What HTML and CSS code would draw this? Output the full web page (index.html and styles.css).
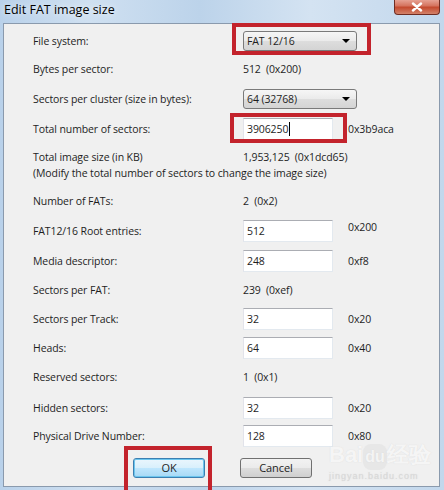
FILE: index.html
```html
<!DOCTYPE html>
<html>
<head>
<meta charset="utf-8">
<link rel="stylesheet" href="styles.css">
</head>
<body>
<div class="window">
  <div class="titlebar">
    <span class="title">Edit FAT image size</span>
    <span class="close"><svg width="14" height="10" viewBox="0 0 14 10"><path d="M3 1.5 L11 8.5 M11 1.5 L3 8.5" stroke="#fff" stroke-width="2.4" stroke-linecap="round"/></svg></span>
  </div>
  <div class="client">
    <div class="form">
      <div class="lbl">File system:</div>
      <div class="val"><div class="combo">FAT 12/16<span class="arrow"></span></div><span class="hl hl-fs"></span></div>
      <div></div>

      <div class="lbl">Bytes per sector:</div>
      <div class="val">512&nbsp; (0x200)</div>
      <div></div>

      <div class="lbl">Sectors per cluster (size in bytes):</div>
      <div class="val"><div class="combo">64 (32768)<span class="arrow"></span></div></div>
      <div></div>

      <div class="lbl">Total number of sectors:</div>
      <div class="val"><div class="input">3906250<span class="caret"></span></div><span class="hl hl-total"></span></div>
      <div class="hex">0x3b9aca</div>

      <div class="lbl end">Total image size (in KB)</div>
      <div class="val end">1,953,125&nbsp; (0x1dcd65)</div>
      <div></div>

      <div class="note">(Modify the total number of sectors to change the image size)</div>

      <div class="lbl">Number of FATs:</div>
      <div class="val">2&nbsp; (0x2)</div>
      <div></div>

      <div class="lbl">FAT12/16 Root entries:</div>
      <div class="val"><div class="input">512</div></div>
      <div class="hex hex-up">0x200</div>

      <div class="lbl">Media descriptor:</div>
      <div class="val"><div class="input">248</div></div>
      <div class="hex">0xf8</div>

      <div class="lbl">Sectors per FAT:</div>
      <div class="val">239&nbsp; (0xef)</div>
      <div></div>

      <div class="lbl">Sectors per Track:</div>
      <div class="val"><div class="input">32</div></div>
      <div class="hex">0x20</div>

      <div class="lbl">Heads:</div>
      <div class="val"><div class="input">64</div></div>
      <div class="hex">0x40</div>

      <div class="lbl">Reserved sectors:</div>
      <div class="val">1&nbsp; (0x1)</div>
      <div></div>

      <div class="lbl">Hidden sectors:</div>
      <div class="val"><div class="input">32</div></div>
      <div class="hex">0x20</div>

      <div class="lbl">Physical Drive Number:</div>
      <div class="val"><div class="input">128</div></div>
      <div class="hex">0x80</div>
    </div>
    <div class="buttons">
      <div class="btn-wrap"><div class="btn btn-ok">OK</div><span class="hl hl-ok"></span></div>
      <div class="btn">Cancel</div>
    </div>
    <div class="watermark">Bai<span class="du">du</span>经验<div class="wm-url">jingyan.baidu.com</div></div>
  </div>
</div>
</body>
</html>
```

FILE: styles.css
```css
* { box-sizing: border-box; }
html, body { margin: 0; padding: 0; }
body {
  width: 444px;
  height: 490px;
  overflow: hidden;
  font-family: "Open Sans", "Noto Sans", sans-serif;
  font-size: 10.5px;
  letter-spacing: -0.1px;
  color: #1e1e1e;
}
.window {
  width: 444px;
  height: 490px;
  background: linear-gradient(90deg, #b9d1ea 0%, #cfe0f1 20%, #bcd3ea 45%, #d4e3f2 70%, #c2d7ec 100%);
  padding: 0 4px 3px 3px;
  display: flex;
  flex-direction: column;
}
.titlebar {
  height: 23px;
  display: flex;
  align-items: flex-start;
  justify-content: space-between;
}
.title {
  font-family: "Open Sans", sans-serif;
  font-size: 12.5px;
  letter-spacing: 0;
  color: #000;
  padding-left: 1px;
  line-height: 20px;
  text-shadow: 0 0 6px rgba(255,255,255,0.9);
}
.close {
  width: 46px;
  height: 16px;
  margin-top: -1px;
  border: 1px solid #6f2c22;
  border-top: none;
  border-radius: 0 0 4px 4px;
  background: linear-gradient(#e9a99c 0%, #d5745f 45%, #c44a2f 55%, #d2826a 100%);
  display: flex;
  align-items: center;
  justify-content: center;
}
.client {
  flex: 1;
  background: #f0f0f0;
  border: 1px solid #8a9aad;
  position: relative;
  padding: 3px 0 0 29px;
}
.form {
  display: grid;
  grid-template-columns: 210px 105px 80px;
  grid-template-rows: 28px 28px 31px 29px 22px 21px 30px 30px 29px 30px 28px 30px 28px 33px 24px;
  align-items: center;
  line-height: 16px;
}
.lbl, .val, .hex { white-space: nowrap; }
.end { align-self: end; }
.note {
  grid-column: 1 / 4;
  align-self: start;
  white-space: nowrap;
}
.val { position: relative; }
.hex-up { margin-top: -8px; }
.combo {
  width: 114px;
  height: 20px;
  border: 1px solid #7a7a7a;
  border-radius: 3px;
  background: linear-gradient(#f6f6f6 0%, #ebebeb 48%, #dddddd 52%, #d4d4d4 100%);
  padding-left: 3px;
  line-height: 18px;
  display: flex;
  align-items: center;
  justify-content: space-between;
}
.arrow {
  width: 0;
  height: 0;
  border-left: 4px solid transparent;
  border-right: 4px solid transparent;
  border-top: 4px solid #000;
  margin-right: 6px;
}
.input {
  width: 90px;
  height: 22px;
  background: #fff;
  border: 1px solid #abadb3;
  border-right-color: #e3e9ef;
  border-bottom-color: #e3e9ef;
  border-left-color: #e2e3ea;
  padding-left: 3px;
  line-height: 18px;
  display: flex;
  align-items: center;
}
.caret {
  display: inline-block;
  width: 1px;
  height: 14px;
  background: #000;
  margin-left: 1px;
}
.hl {
  position: absolute;
  border: 4px solid #c3232c;
  pointer-events: none;
}
.hl-fs { left: -11px; top: -8px; width: 139px; height: 32px; }
.hl-total { left: -13px; top: -5px; width: 117px; height: 30px; }
.buttons {
  display: flex;
  gap: 35px;
  margin-top: 10px;
  padding-left: 100px;
}
.btn-wrap { position: relative; }
.btn {
  width: 72px;
  height: 20px;
  border: 1px solid #707070;
  border-radius: 3px;
  background: linear-gradient(#f2f2f2 0%, #ebebeb 48%, #dddddd 52%, #cfcfcf 100%);
  text-align: center;
  line-height: 18px;
  font-size: 11px;
}
.btn-ok {
  border-color: #3c7fb1;
  background: linear-gradient(#eaf6fd 0%, #d9f0fc 48%, #bee6fd 52%, #a7d9f5 100%);
  box-shadow: inset 0 0 0 1px #6cc6ee;
}
.hl-ok { left: -9px; top: -12px; width: 88px; height: 50px; }
.watermark {
  position: absolute;
  left: 325px;
  top: 418px;
  font-family: "Liberation Sans", sans-serif;
  font-size: 22px;
  font-weight: bold;
  letter-spacing: 0;
  color: rgba(255,255,255,0.75);
  text-shadow: 0 0 1px rgba(200,200,200,0.6);
  line-height: 26px;
  white-space: nowrap;
}
.du {
  display: inline-block;
  background: rgba(225,225,225,0.6);
  border-radius: 8px;
  padding: 0 2px;
  font-size: 16px;
}
.wm-url {
  font-size: 9px;
  font-weight: normal;
  line-height: 12px;
  letter-spacing: 1px;
  color: rgba(215,215,215,0.8);
}
```
